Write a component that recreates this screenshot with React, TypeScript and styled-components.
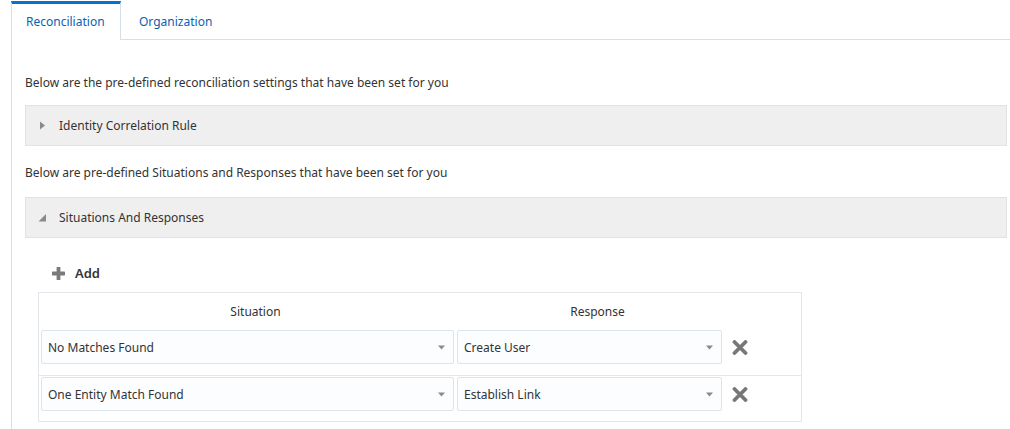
import React from "react";
import styled, { createGlobalStyle } from "styled-components";

const GlobalStyle = createGlobalStyle`
  html, body {
    margin: 0;
    padding: 0;
    background: #ffffff;
  }
  body {
    font-family: "Segoe UI", "Noto Sans", "Open Sans", sans-serif;
    color: #333333;
    font-size: 12px;
  }
  * { box-sizing: border-box; }
`;

const Page = styled.div`
  padding: 1px 0 0 11px;
  width: 1010px;
  height: 429px;
  overflow: hidden;
`;

const TabBar = styled.div`
  display: flex;
  align-items: stretch;
  height: 39px;
  border-bottom: 1px solid #d6dfe6;
`;

const Tab = styled.div<{ $active?: boolean }>`
  display: flex;
  align-items: center;
  padding: 0 ${(p) => (p.$active ? "13px" : "18px")} 0 ${(p) => (p.$active ? "14px" : "18px")};
  font-size: 12px;
  color: #0a5fb4;
  cursor: pointer;
  ${(p) =>
    p.$active
      ? `
    width: 110px;
    border-top: 3px solid #0572ce;
    border-left: 1px solid #d6dfe6;
    border-right: 1px solid #d6dfe6;
    background: #ffffff;
    margin-bottom: -1px;
    padding-bottom: 1px;
  `
      : `
    border-top: 3px solid transparent;
  `}
`;

const Panel = styled.div`
  border-left: 1px solid #d6dfe6;
  padding: 0 3px 40px 13px;
  display: flex;
  flex-direction: column;
`;

const Intro = styled.p<{ $top: number }>`
  margin: ${(p) => p.$top}px 0 0 -13px;
  padding-left: 13px;
  line-height: 16px;
  font-size: 12px;
`;

const Accordion = styled.div<{ $top: number }>`
  margin-top: ${(p) => p.$top}px;
  height: 41px;
  background: #efefef;
  border: 1px solid #e2e2e2;
  display: flex;
  align-items: center;
  padding-left: 12px;
  font-size: 12px;
  color: #333333;
`;

const CaretSlot = styled.span`
  width: 21px;
  flex: none;
  display: flex;
  align-items: center;
`;

const Caret = styled.svg`
  width: 8px;
  height: 9px;
  flex: none;
`;

const Toolbar = styled.div`
  margin-top: 26px;
  padding-left: 27px;
  display: flex;
  align-items: center;
  gap: 10px;
  height: 18px;
  font-size: 13px;
  font-weight: 600;
  color: #333333;
`;

const Table = styled.div`
  margin: 10px 0 0 13px;
  width: 764px;
  border: 1px solid #e3e7ec;
  display: flex;
  flex-direction: column;
`;

const HeaderRow = styled.div`
  display: grid;
  grid-template-columns: 413px 265px;
  column-gap: 3px;
  padding-left: 2px;
  height: 37px;
  align-items: center;
`;

const HeaderCell = styled.div`
  text-align: center;
  padding-left: 16px;
  font-size: 12px;
  color: #333333;
`;

const Row = styled.div<{ $divided?: boolean }>`
  display: flex;
  align-items: center;
  padding: ${(p) => (p.$divided ? "1px" : "0")} 0 ${(p) => (p.$divided ? "10px" : "11px")} 2px;
  border-top: ${(p) => (p.$divided ? "1px solid #e3e7ec" : "none")};
`;

const Select = styled.div<{ $width: number; $gap: number }>`
  width: ${(p) => p.$width}px;
  margin-right: ${(p) => p.$gap}px;
  height: 34px;
  background: #fcfdfe;
  border: 1px solid #dfe4ea;
  border-radius: 2px;
  display: flex;
  align-items: center;
  justify-content: space-between;
  padding: 0 8px 0 6px;
  font-size: 12px;
  color: #333333;
`;

const DropArrow = styled.svg`
  width: 7px;
  height: 5px;
  flex: none;
`;

const RemoveButton = styled.svg`
  width: 16px;
  height: 15px;
  flex: none;
  cursor: pointer;
`;

const ChevronDown = () => (
  <DropArrow viewBox="0 0 7 5">
    <path d="M0 0.5 L7 0.5 L3.5 4.5 Z" fill="#8a8a8a" />
  </DropArrow>
);

const Remove = () => (
  <RemoveButton viewBox="0 0 16 15">
    <path
      d="M2.5 2 L13.5 13 M13.5 2 L2.5 13"
      stroke="#777777"
      strokeWidth="3.8"
      strokeLinecap="round"
    />
  </RemoveButton>
);

const PlusIcon = () => (
  <svg width="13" height="13" viewBox="0 0 13 13">
    <rect x="4.6" y="0" width="3.8" height="13" rx="0.6" fill="#7a7a7a" />
    <rect x="0" y="4.6" width="13" height="3.8" rx="0.6" fill="#7a7a7a" />
  </svg>
);

type Mapping = { situation: string; response: string };

const mappings: Mapping[] = [
  { situation: "No Matches Found", response: "Create User" },
  { situation: "One Entity Match Found", response: "Establish Link" },
];

export default function App() {
  return (
    <>
      <GlobalStyle />
      <Page>
        <TabBar>
          <Tab $active>Reconciliation</Tab>
          <Tab>Organization</Tab>
        </TabBar>
        <Panel>
          <Intro $top={35}>
            Below are the pre-defined reconciliation settings that have been set for you
          </Intro>
          <Accordion $top={14}>
            <CaretSlot>
              <Caret viewBox="0 0 8 9">
                <path d="M2 0.5 L7 4.5 L2 8.5 Z" fill="#8a8a8a" />
              </Caret>
            </CaretSlot>
            Identity Correlation Rule
          </Accordion>
          <Intro $top={19}>
            Below are pre-defined Situations and Responses that have been set for you
          </Intro>
          <Accordion $top={16}>
            <CaretSlot>
              <Caret viewBox="0 0 8 9">
                <path d="M8 1 L8 8.5 L0.5 8.5 Z" fill="#8a8a8a" />
              </Caret>
            </CaretSlot>
            Situations And Responses
          </Accordion>
          <Toolbar>
            <PlusIcon />
            Add
          </Toolbar>
          <Table>
            <HeaderRow>
              <HeaderCell>Situation</HeaderCell>
              <HeaderCell>Response</HeaderCell>
            </HeaderRow>
            {mappings.map((m, i) => (
              <Row key={m.situation} $divided={i > 0}>
                <Select $width={413} $gap={3}>
                  {m.situation}
                  <ChevronDown />
                </Select>
                <Select $width={265} $gap={10}>
                  {m.response}
                  <ChevronDown />
                </Select>
                <Remove />
              </Row>
            ))}
          </Table>
        </Panel>
      </Page>
    </>
  );
}
